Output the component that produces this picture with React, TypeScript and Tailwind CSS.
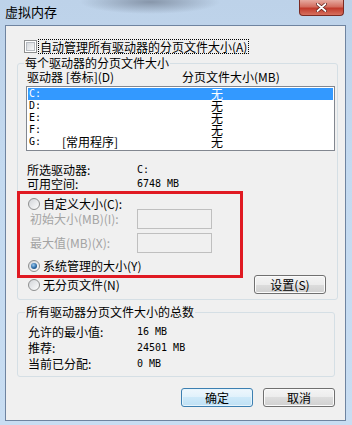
import React from "react";

const mono = "font-['DejaVu_Sans_Mono',monospace] text-[10px]";

function Checkbox() {
  return (
    <span className="block h-[13px] w-[13px] shrink-0 border border-[#8e8f8f] bg-white p-[1px]">
      <span className="block h-full w-full border border-[#b8bcc2] bg-[linear-gradient(135deg,#d6d9dd,#f8f8f8)]" />
    </span>
  );
}

function Radio({ checked = false }: { checked?: boolean }) {
  return (
    <span className="flex h-[12px] w-[12px] shrink-0 items-center justify-center rounded-full border border-[#8e8f8f] bg-[linear-gradient(135deg,#d2d5d9,#fdfdfd)]">
      {checked && (
        <span className="block h-[6px] w-[6px] rounded-full bg-[radial-gradient(circle_at_40%_35%,#9ccaf0,#2a6aa6_55%,#173f68)]" />
      )}
    </span>
  );
}

function Button({ children, primary = false }: { children: React.ReactNode; primary?: boolean }) {
  return (
    <div
      className={
        primary
          ? "flex h-[19px] w-[72px] items-center justify-center rounded-[3px] border border-[#3c7fb1] bg-[linear-gradient(180deg,#eef7fd_0%,#e0f1fb_50%,#cde9f9_50%,#bfe0f4_100%)] shadow-[inset_0_0_0_1px_#e6f4fc]"
          : "flex h-[19px] w-[72px] items-center justify-center rounded-[3px] border border-[#707070] bg-[linear-gradient(180deg,#f4f4f4_0%,#ececec_50%,#dddddd_50%,#d0d0d0_100%)] shadow-[inset_0_0_0_1px_#fbfbfb]"
      }
    >
      {children}
    </div>
  );
}

export default function App() {
  const drives = [
    { l: "C:", v: "", sel: true },
    { l: "D:", v: "" },
    { l: "E:", v: "" },
    { l: "F:", v: "" },
    { l: "G:", v: "[常用程序]" },
  ];
  return (
    <div className="relative h-[425px] w-[352px] overflow-hidden bg-[radial-gradient(ellipse_70px_12px_at_150px_2px,#8796aa,transparent),linear-gradient(180deg,#bdd2e9_0%,#c4daf0_40%,#c8ddf2_100%)] font-['Noto_Sans_CJK_SC',sans-serif] text-[12px] leading-[12px] text-black">
      {/* title bar */}
      <div className="flex h-[25px] justify-between">
        <span className="pl-[5px] pt-[5px] text-[13px] leading-[14px]">虚拟内存</span>
        <div className="mr-[8px] flex h-[16px] w-[45px] items-center justify-center rounded-b-[4px] border border-t-0 border-[#7b2a22] bg-[linear-gradient(180deg,#e6aaa0_0%,#d36d5f_45%,#c13a2b_55%,#d6705e_100%)]">
          <svg width="11" height="9" viewBox="0 0 11 9">
            <path d="M1.5 1 L9.5 8 M9.5 1 L1.5 8" stroke="#5a1a14" strokeWidth="3.2" strokeLinecap="round" />
            <path d="M1.5 1 L9.5 8 M9.5 1 L1.5 8" stroke="white" strokeWidth="1.8" strokeLinecap="round" />
          </svg>
        </div>
      </div>

      {/* client area */}
      <div className="ml-[5px] h-[396px] w-[341px] border border-[#6f84a0] bg-[#f0f0f0]">
        <div className="ml-[18px] mt-[13px] flex h-[15px] items-center">
          <Checkbox />
          <span className="ml-[1px] h-[15px] border border-dotted border-black px-[1px] leading-[13px]">
            自动管理所有驱动器的分页文件大小(A)
          </span>
        </div>

        {/* group 1 */}
        <fieldset className="ml-[11px] mt-[3px] w-[321px] rounded-[3px] border border-[#d5dfe5] pb-[5px]">
          <legend className="ml-[6px] px-[1px] leading-[12px]">每个驱动器的分页文件大小</legend>
          <div className="mt-[2px] flex h-[12px] pl-[9px]">
            <span className="w-[155px]">驱动器 [卷标](D)</span>
            <span>分页文件大小(MB)</span>
          </div>
          <div className="ml-[8px] mt-[3px] h-[65px] w-[309px] border border-[#828790] bg-white p-[1px]">
            {drives.map((d) => (
              <div
                key={d.l}
                className={
                  d.sel
                    ? "flex h-[12px] items-center bg-[#3399ff] text-white"
                    : "flex h-[12px] items-center"
                }
              >
                <span className="flex w-[183px] items-center">
                  <span className={`w-[34px] pl-[1px] ${mono}`}>{d.l}</span>
                  <span>{d.v}</span>
                </span>
                <span>无</span>
              </div>
            ))}
          </div>

          <div className="mt-[12px] flex h-[14px] items-center pl-[9px]">
            <span className="w-[110px]">所选驱动器:</span>
            <span className={mono}>C:</span>
          </div>
          <div className="flex h-[14px] items-center pl-[9px]">
            <span className="w-[110px]">可用空间:</span>
            <span className={mono}>6748 MB</span>
          </div>

          <div className="mt-[7px] flex h-[11px] items-center pl-[10px]">
            <Radio />
            <span className="ml-[3px]">自定义大小(C):</span>
          </div>
          <div className="flex h-[20px] items-center pl-[12px]">
            <span className="w-[107px] text-[#a3a3a3]">初始大小(MB)(I):</span>
            <span className="h-[20px] w-[75px] border border-[#bfbfbf] bg-[#f0f0f0]" />
          </div>
          <div className="mt-[4px] flex h-[20px] items-center pl-[12px]">
            <span className="w-[107px] text-[#a3a3a3]">最大值(MB)(X):</span>
            <span className="h-[20px] w-[75px] border border-[#bfbfbf] bg-[#f0f0f0]" />
          </div>
          <div className="mt-[7px] flex h-[12px] items-center pl-[10px]">
            <Radio checked />
            <span className="ml-[3px]">系统管理的大小(Y)</span>
          </div>
          <div className="mt-[3px] flex h-[19px] items-center justify-between pl-[10px] pr-[11px]">
            <div className="flex items-center">
              <Radio />
              <span className="ml-[3px]">无分页文件(N)</span>
            </div>
            <Button>设置(S)</Button>
          </div>
        </fieldset>

        {/* group 2 */}
        <fieldset className="ml-[11px] mt-[6px] w-[318px] rounded-[3px] border border-[#d5dfe5] pb-[4px]">
          <legend className="ml-[7px] px-[1px] leading-[12px]">所有驱动器分页文件大小的总数</legend>
          <div className="mt-[6px] flex h-[16px] items-center pl-[10px]">
            <span className="w-[109px]">允许的最小值:</span>
            <span className={mono}>16 MB</span>
          </div>
          <div className="flex h-[16px] items-center pl-[10px]">
            <span className="w-[109px]">推荐:</span>
            <span className={mono}>24501 MB</span>
          </div>
          <div className="flex h-[16px] items-center pl-[10px]">
            <span className="w-[109px]">当前已分配:</span>
            <span className={mono}>0 MB</span>
          </div>
        </fieldset>

        <div className="mt-[11px] flex justify-end gap-[10px] pr-[10px]">
          <Button primary>确定</Button>
          <Button>取消</Button>
        </div>
      </div>

      {/* red annotation box */}
      <div className="absolute left-[17px] top-[191px] h-[87px] w-[226px] border-[3px] border-[#e01a22]" />
    </div>
  );
}
